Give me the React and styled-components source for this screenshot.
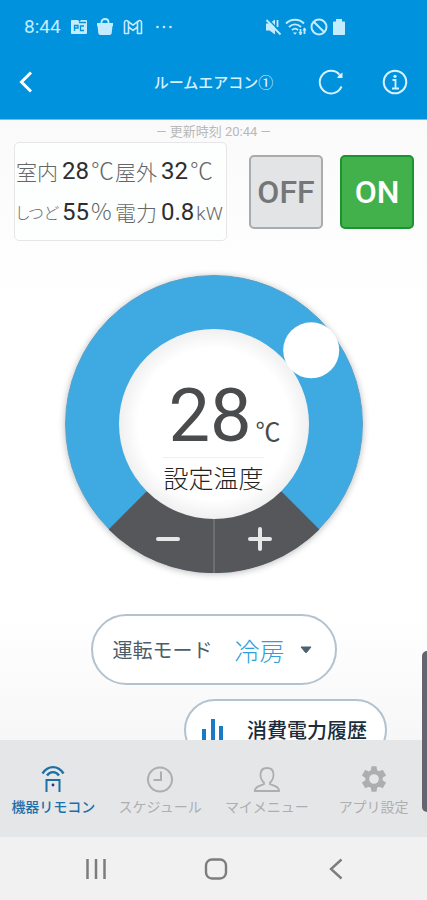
import React, { useState } from "react";
import styled, { createGlobalStyle } from "styled-components";

const GlobalStyle = createGlobalStyle`
  *, *::before, *::after {
    box-sizing: border-box;
  }
  body {
    margin: 0;
    font-family: Roboto, "Noto Sans CJK JP", sans-serif;
    color: #4a4a4a;
  }
  button, select, input {
    font: inherit;
    color: inherit;
  }
`;

const Page = styled.div`
  position: relative;
  display: flex;
  flex-direction: column;
  height: 100vh;
  background: #fff;
`;

const Header = styled.header`
  padding-bottom: 9px;
  background: #0092dc;
  border-bottom: 1px solid #6fbfe8;
  color: #d6f1ff;
`;

const StatusBar = styled.div`
  display: flex;
  align-items: center;
  justify-content: space-between;
  height: 54px;
  padding: 0 80px 0 24px;
  color: #c4ebff;
`;

const StatusGroup = styled.div`
  display: flex;
  align-items: center;
  gap: ${(props) => props.$gap};
`;

const Clock = styled.time`
  font-size: 19px;
  line-height: 24px;
`;

const AppBar = styled.div`
  display: grid;
  grid-template-columns: 1fr auto 1fr;
  align-items: center;
  height: 56px;
  padding: 0 18px;
`;

const BarActions = styled.div`
  display: flex;
  justify-content: flex-end;
  gap: 36px;
`;

const IconButton = styled.button`
  display: flex;
  align-items: center;
  justify-content: center;
  width: 28px;
  height: 28px;
  padding: 0;
  border: 0;
  background: none;
  cursor: pointer;
`;

const BackButton = styled(IconButton)`
  justify-content: flex-start;
`;

const PageTitle = styled.h1`
  margin: 0;
  font-family: "Noto Sans CJK JP", sans-serif;
  font-size: 15px;
  font-weight: 500;
  line-height: 24px;
`;

const Main = styled.main`
  flex: 1;
  min-height: 0;
  overflow: hidden;
  background: linear-gradient(#fafafa, #fff 30%, #fff 80%, #f7f7f8);
`;

const Updated = styled.p`
  margin: 0;
  padding-top: 2px;
  text-align: center;
  font-size: 13px;
  line-height: 20px;
  color: #b9b9b9;
`;

const Overview = styled.section`
  display: flex;
  align-items: center;
  gap: 17px;
  padding: 0 13px 0 14px;
`;

const Readings = styled.dl`
  flex: 1;
  display: grid;
  grid-template-columns: 99px 1fr;
  align-content: center;
  height: 99px;
  margin: 0 5px 0 0;
  padding-left: 1px;
  border: 1px solid #e4e6e8;
  border-radius: 5px;
  background: #fdfefe;
`;

const Reading = styled.div`
  display: flex;
  align-items: center;
  height: 41px;
  white-space: nowrap;
`;

const ReadingName = styled.dt`
  flex: none;
  width: 42px;
  margin-right: 4px;
  font-family: "Noto Sans CJK JP", sans-serif;
  font-size: ${(props) => (props.$long ? "16px" : "21px")};
  font-weight: 300;
  font-feature-settings: "palt";
  color: #666;
`;

const ReadingValue = styled.dd`
  display: flex;
  align-items: baseline;
  gap: 2px;
  margin: 0;
  font-size: 24px;
  color: #2e2e2e;
`;

const Unit = styled.span`
  font-family: ${(props) =>
    props.$latin ? "Roboto" : '"Noto Sans CJK JP"'}, sans-serif;
  font-size: ${(props) => (props.$latin ? "19px" : "23px")};
  font-weight: 300;
  line-height: 24px;
  color: #666;
`;

const PowerButton = styled.button`
  width: 74px;
  height: 74px;
  padding: 0;
  border: 2px solid ${(props) => (props.$on ? "#1c9331" : "#a9abad")};
  border-radius: 5px;
  background: ${(props) => (props.$on ? "#43b14b" : "#e3e4e6")};
  color: ${(props) => (props.$on ? "#fff" : "#747678")};
  font-size: 32px;
  font-weight: 500;
  cursor: pointer;
`;

const Dial = styled.section`
  position: relative;
  width: 298px;
  height: 298px;
  margin: 34px auto 0;
  border-radius: 50%;
  box-shadow: 0 1px 7px rgba(0, 0, 0, 0.28);
`;

const DialRing = styled.svg`
  display: block;
  width: 100%;
  height: 100%;
`;

const DialRange = styled.input`
  position: absolute;
  inset: 0;
  width: 100%;
  height: 50%;
  margin: 0;
  opacity: 0;
  cursor: pointer;
`;

const DialFace = styled.div`
  position: absolute;
  inset: 0;
  display: flex;
  flex-direction: column;
  align-items: center;
  padding-top: 104px;
  pointer-events: none;
`;

const Temperature = styled.output`
  display: flex;
  align-items: baseline;
  gap: 4px;
  padding-left: 22px;
  font-size: 74px;
  line-height: 74px;
  color: #4a4b4d;
`;

const Degree = styled.span`
  font-family: "Noto Sans CJK JP", sans-serif;
  font-size: 25px;
  line-height: 25px;
`;

const DialLabel = styled.label`
  margin-top: 4px;
  padding-top: 4px;
  border-top: 1px solid #f0f0f0;
  font-family: "Noto Sans CJK JP", sans-serif;
  font-size: 25px;
  font-weight: 300;
  line-height: 30px;
  color: #222;
`;

const Steps = styled.div`
  position: absolute;
  left: 0;
  right: 0;
  bottom: 12px;
  display: flex;
  justify-content: center;
  gap: 48px;
`;

const StepButton = styled(IconButton)`
  width: 44px;
  height: 44px;
  color: #e8e8e8;
`;

const ModeRow = styled.div`
  display: flex;
  justify-content: center;
  margin-top: 41px;
`;

const ModePill = styled.div`
  position: relative;
  display: flex;
  align-items: center;
  gap: 22px;
  height: 71px;
  padding: 0 22px 0 20px;
  border: 2px solid #b3c2cf;
  border-radius: 36px;
  background: #fff;
`;

const ModeLabel = styled.label`
  font-family: "Noto Sans CJK JP", sans-serif;
  font-size: 20px;
  font-weight: 400;
  color: #4b5d69;
`;

const ModeSelect = styled.select`
  appearance: none;
  width: 78px;
  padding: 0;
  border: 0;
  background: none;
  font-family: "Noto Sans CJK JP", sans-serif;
  font-size: 25px;
  font-weight: 300;
  line-height: 36px;
  color: #2f9fdc;
  cursor: pointer;
`;

const Caret = styled.svg`
  position: absolute;
  right: 23px;
  pointer-events: none;
`;

const HistoryRow = styled.div`
  display: flex;
  justify-content: flex-end;
  margin-top: 14px;
  padding-right: 40px;
`;

const HistoryButton = styled.button`
  display: flex;
  align-items: center;
  gap: 22px;
  height: 62px;
  padding: 0 18px 0 15px;
  border: 2px solid #b3c2cf;
  border-radius: 31px;
  background: #fff;
  font-family: "Noto Sans CJK JP", sans-serif;
  font-size: 20px;
  font-weight: 500;
  line-height: 30px;
  color: #1b2c3a;
  white-space: nowrap;
  cursor: pointer;
`;

const TabBar = styled.nav`
  display: grid;
  grid-template-columns: repeat(4, 1fr);
  height: 97px;
  background: #e5e6e8;
`;

const Tab = styled.a`
  display: flex;
  flex-direction: column;
  align-items: center;
  gap: 1px;
  padding-top: 25px;
  font-family: "Noto Sans CJK JP", sans-serif;
  font-size: 14px;
  font-weight: ${(props) => (props.$active ? 500 : 400)};
  line-height: 24px;
  text-decoration: none;
  white-space: nowrap;
  color: ${(props) => (props.$active ? "#1b70a8" : "#adaeb0")};
`;

const SystemBar = styled.div`
  display: flex;
  align-items: center;
  justify-content: space-between;
  height: 63px;
  padding: 0 77px 0 82px;
  background: #f1f1f1;
  color: #7d7d7d;
`;

const EdgeHandle = styled.div`
  position: absolute;
  top: 651px;
  right: 0;
  width: 5px;
  height: 161px;
  border-radius: 5px 0 0 5px;
  background: #66656f;
`;

const READINGS = [
  { name: "室内", value: "28", unit: "℃" },
  { name: "屋外", value: "32", unit: "℃" },
  { name: "しつど", value: "55", unit: "%" },
  { name: "電力", value: "0.8", unit: "kW", latin: true },
];

const MODES = ["冷房", "暖房", "除湿", "送風"];

const MIN_TEMP = 12;
const MAX_TEMP = 35;

const RemoteIcon = () => (
  <svg width="26" height="28" viewBox="0 0 26 28" fill="none" stroke="currentColor" strokeWidth="2">
    <path d="M2.500 8.500C8 0 18 0 23.500 8.500" strokeWidth="2.400" />
    <path d="M7 10.500c3-4.500 9-4.500 12 0" strokeWidth="2.400" />
    <path d="M6.500 27V15h13v12M5.500 15h15" />
    <circle cx="13" cy="20" r="1.400" fill="#2a2f8f" stroke="none" />
  </svg>
);

const ClockIcon = () => (
  <svg width="28" height="28" viewBox="0 0 28 28" fill="none" stroke="currentColor" strokeWidth="2">
    <circle cx="14" cy="14.500" r="12" />
    <path d="M15 6.500V15H7.500" />
  </svg>
);

const UserIcon = () => (
  <svg width="28" height="28" viewBox="0 0 28 28" fill="none" stroke="currentColor" strokeWidth="1.800" strokeLinejoin="round">
    <path d="M11 17.500C8.500 15.500 7.500 12.500 7.500 9.500 7.500 5.500 10 3 14 3s6.500 2.500 6.500 6.500c0 3-1 6-3.500 8v1.700c4 1.300 9 2.300 9.300 6.800H1.700C2 21.500 7 20.500 11 19.200z" />
  </svg>
);

const GearIcon = () => (
  <svg width="30" height="28" viewBox="-1 0 26 24" fill="currentColor">
    <path d="M19.430 12.980c.04-.32.07-.64.07-.98s-.03-.66-.07-.98l2.700-1.900c.2-.15.250-.42.120-.64l-2.400-4.100c-.12-.22-.39-.3-.61-.22l-2.900 1.200c-.52-.4-1.080-.73-1.690-.98l-.38-3C14.250 1.180 14.040 1 13.800 1h-3.600c-.25 0-.46.18-.49.42l-.38 3c-.61.250-1.170.59-1.690.98l-2.900-1.200c-.23-.09-.49 0-.61.22l-2.400 4.100c-.13.22-.07.490.12.640l2.700 1.900c-.04.320-.07.650-.07.980s.03.660.07.980l-2.700 1.900c-.19.150-.24.420-.12.640l2.400 4.100c.12.220.39.300.61.220l2.900-1.200c.52.400 1.080.730 1.690.980l.38 3c.03.240.24.420.49.420h3.600c.25 0 .46-.18.49-.42l.38-3c.61-.25 1.170-.59 1.690-.98l2.900 1.200c.23.090.49 0 .61-.22l2.400-4.100c.12-.22.07-.49-.12-.64zM12 16.200a4.200 4.200 0 1 1 0-8.400 4.200 4.200 0 0 1 0 8.400z" />
  </svg>
);

const TABS = [
  { label: "機器リモコン", icon: <RemoteIcon />, active: true },
  { label: "スケジュール", icon: <ClockIcon /> },
  { label: "マイメニュー", icon: <UserIcon /> },
  { label: "アプリ設定", icon: <GearIcon /> },
];

function StatusIcons() {
  return (
    <StatusGroup $gap="3px">
      <svg width="18" height="18" viewBox="0 0 18 18" fill="currentColor">
        <path d="M2 5.500h3.500L11 1.500v15L5.500 12.500H2z" />
        <path d="M13.500 2v7" stroke="currentColor" strokeWidth="1.800" />
        <path d="M4 1l13 13.500" stroke="#0092dc" strokeWidth="1.600" />
        <path d="M2.500 2l14 14.500" stroke="currentColor" strokeWidth="1.800" />
      </svg>
      <svg width="22" height="18" viewBox="0 0 22 18" fill="none" stroke="currentColor" strokeWidth="1.800">
        <path d="M1 5.500C6 .5 14 .5 19 5.500M4 9c3.500-3.500 8.500-3.500 12 0M7 12.200c2-2 4.500-2 6 0" />
        <path d="M8 14.500l2 2.300 2-2.300z" fill="currentColor" stroke="none" />
        <path d="M15.500 11v6M19.500 10v6" />
        <path d="M13.500 14l2 3 2-3zM17.500 12.500l2-3 2 3z" fill="currentColor" stroke="none" />
      </svg>
      <svg width="18" height="18" viewBox="0 0 18 18" fill="none" stroke="currentColor" strokeWidth="2">
        <circle cx="9" cy="9" r="7.500" />
        <path d="M3.700 3.700l10.600 10.600" />
      </svg>
      <svg width="16" height="18" viewBox="0 0 16 18" fill="currentColor">
        <path d="M5 1h6v2.500h2c.6 0 1 .4 1 1V16c0 .6-.4 1-1 1H3c-.6 0-1-.4-1-1V4.500c0-.6.4-1 1-1h2z" />
      </svg>
    </StatusGroup>
  );
}

function TopBar() {
  return (
    <Header>
      <StatusBar>
        <StatusGroup $gap="10px">
          <Clock>8:44</Clock>
          <svg width="16" height="18" viewBox="0 0 16 18">
            <path d="M1 2h6l1.500 2L10 2h5c.5 0 1 .4 1 1v12c0 .5-.5 1-1 1H1c-.6 0-1-.5-1-1V3c0-.6.4-1 1-1z" fill="currentColor" />
            <path d="M3.500 13V7.500h3.500V10H3.500M13 8H9.500v4.500H13M8 4.500h7" stroke="#0092dc" strokeWidth="1.300" fill="none" />
          </svg>
          <svg width="16" height="18" viewBox="0 0 16 18">
            <path d="M0 5h16v3h-.5l-.8 7c-.1 1.300-1 2-2.200 2h-9c-1.200 0-2.100-.7-2.200-2l-.8-7H0z" fill="currentColor" />
            <path d="M4.500 6V4c0-4 7-4 7 0v2" fill="none" stroke="currentColor" strokeWidth="1.800" />
          </svg>
          <svg width="20" height="18" viewBox="0 0 20 18" fill="none" stroke="currentColor" strokeWidth="1.600" strokeLinejoin="round">
            <path d="M1.500 15.500V4.500c0-2 1.800-2.500 3-1.500L10 7.200 15.500 3c1.200-1 3-.5 3 1.500v11h-4V9L10 12.400 5.500 9v6.500z" />
            <path d="M5.500 9V4M14.500 9V4" />
          </svg>
          <svg width="22" height="18" viewBox="0 0 22 18" fill="currentColor">
            <circle cx="4.500" cy="9" r="1.300" />
            <circle cx="11" cy="9" r="1.300" />
            <circle cx="17.500" cy="9" r="1.300" />
          </svg>
        </StatusGroup>
        <StatusIcons />
      </StatusBar>
      <AppBar>
        <BackButton aria-label="戻る">
          <svg width="16" height="24" viewBox="0 0 16 24" fill="none" stroke="#fff" strokeWidth="3">
            <path d="M13 2.500L3.500 12l9.500 9.500" />
          </svg>
        </BackButton>
        <PageTitle>ルームエアコン①</PageTitle>
        <BarActions>
          <IconButton aria-label="更新">
            <svg width="28" height="28" viewBox="0 0 28 28" fill="none" stroke="currentColor" strokeWidth="2">
              <path d="M24.500 18.500A11.300 11.300 0 1 1 22.500 6.600" />
              <path d="M25.500 4.500v5.500H20l2-3z" fill="currentColor" stroke="none" />
            </svg>
          </IconButton>
          <IconButton aria-label="情報">
            <svg width="28" height="28" viewBox="0 0 28 28" fill="none" stroke="currentColor" strokeWidth="2">
              <circle cx="14" cy="14" r="11.300" />
              <path d="M11.500 12H14.500V20M11 20.500h7" strokeWidth="1.800" />
              <circle cx="14" cy="8.300" r="1.600" fill="currentColor" stroke="none" />
            </svg>
          </IconButton>
        </BarActions>
      </AppBar>
    </Header>
  );
}

function TemperatureDial({ value, onChange }) {
  const ratio = (value - MIN_TEMP) / (MAX_TEMP - MIN_TEMP);
  const angle = ((ratio * 270 - 135) * Math.PI) / 180;
  const knobX = 149 + 122 * Math.sin(angle);
  const knobY = 149 - 122 * Math.cos(angle);

  const step = (amount) =>
    onChange(Math.min(MAX_TEMP, Math.max(MIN_TEMP, value + amount)));

  return (
    <Dial>
      <DialRing viewBox="0 0 298 298" aria-hidden="true">
        <defs>
          <radialGradient id="face">
            <stop offset="0.8" stopColor="#fff" />
            <stop offset="1" stopColor="#f0f0f0" />
          </radialGradient>
        </defs>
        <circle cx="149" cy="149" r="148.500" fill="#3fa9e1" stroke="#5f9fc4" />
        <path d="M149 149L43.600 254.400A149 149 0 0 0 254.400 254.400z" fill="#56575a" />
        <path d="M149 240v58" stroke="#6d6e71" strokeWidth="2" />
        <circle cx="149" cy="149" r="95" fill="url(#face)" />
        <circle cx={knobX} cy={knobY} r="28" fill="#fff" />
      </DialRing>
      <DialRange
        id="temperature"
        type="range"
        min={MIN_TEMP}
        max={MAX_TEMP}
        value={value}
        onChange={(e) => onChange(Number(e.target.value))}
      />
      <DialFace>
        <Temperature htmlFor="temperature">
          {value}
          <Degree>℃</Degree>
        </Temperature>
        <DialLabel htmlFor="temperature">設定温度</DialLabel>
      </DialFace>
      <Steps>
        <StepButton aria-label="下げる" onClick={() => step(-1)}>
          <svg width="26" height="26" viewBox="0 0 26 26" stroke="currentColor" strokeWidth="4" strokeLinecap="round">
            <path d="M3 13h20" />
          </svg>
        </StepButton>
        <StepButton aria-label="上げる" onClick={() => step(1)}>
          <svg width="26" height="26" viewBox="0 0 26 26" stroke="currentColor" strokeWidth="4" strokeLinecap="round">
            <path d="M3 13h20M13 3v20" />
          </svg>
        </StepButton>
      </Steps>
    </Dial>
  );
}

function App() {
  const [power, setPower] = useState(true);
  const [temperature, setTemperature] = useState(28);
  const [mode, setMode] = useState(MODES[0]);

  return (
    <Page>
      <GlobalStyle />
      <TopBar />
      <Main>
        <Updated>― 更新時刻 20:44 ―</Updated>
        <Overview>
          <Readings>
            {READINGS.map((reading) => (
              <Reading key={reading.name}>
                <ReadingName $long={reading.name.length > 2}>
                  {reading.name}
                </ReadingName>
                <ReadingValue>
                  {reading.value}
                  <Unit $latin={reading.latin}>{reading.unit}</Unit>
                </ReadingValue>
              </Reading>
            ))}
          </Readings>
          <PowerButton aria-pressed={!power} onClick={() => setPower(false)}>
            OFF
          </PowerButton>
          <PowerButton $on aria-pressed={power} onClick={() => setPower(true)}>
            ON
          </PowerButton>
        </Overview>
        <TemperatureDial value={temperature} onChange={setTemperature} />
        <ModeRow>
          <ModePill>
            <ModeLabel htmlFor="mode">運転モード</ModeLabel>
            <ModeSelect
              id="mode"
              value={mode}
              onChange={(e) => setMode(e.target.value)}
            >
              {MODES.map((name) => (
                <option key={name}>{name}</option>
              ))}
            </ModeSelect>
            <Caret width="12" height="8" viewBox="0 0 12 8" fill="#4b6273">
              <path d="M1 1h10L6.500 6.500h-1z" stroke="#4b6273" strokeLinejoin="round" />
            </Caret>
          </ModePill>
        </ModeRow>
        <HistoryRow>
          <HistoryButton>
            <svg width="24" height="26" viewBox="0 0 24 26" fill="#1a7ac4">
              <path d="M1 12h4v14H1zM10 2h4v24h-4zM18 9h4v17h-4z" />
            </svg>
            消費電力履歴
          </HistoryButton>
        </HistoryRow>
      </Main>
      <TabBar>
        {TABS.map((tab) => (
          <Tab
            key={tab.label}
            href="#"
            $active={tab.active}
            aria-current={tab.active ? "page" : undefined}
          >
            {tab.icon}
            {tab.label}
          </Tab>
        ))}
      </TabBar>
      <SystemBar>
        <IconButton aria-label="履歴">
          <svg width="28" height="28" viewBox="0 0 28 28" stroke="currentColor" strokeWidth="2.500">
            <path d="M5.500 4v20M14 4v20M22.500 4v20" />
          </svg>
        </IconButton>
        <IconButton aria-label="ホーム">
          <svg width="28" height="28" viewBox="0 0 28 28" fill="none" stroke="currentColor" strokeWidth="2.400">
            <rect x="4" y="4.500" width="20" height="19" rx="6" />
          </svg>
        </IconButton>
        <IconButton aria-label="戻る">
          <svg width="28" height="28" viewBox="0 0 28 28" fill="none" stroke="currentColor" strokeWidth="2.400">
            <path d="M19.500 4.500L9 14l10.500 9.500" />
          </svg>
        </IconButton>
      </SystemBar>
      <EdgeHandle />
    </Page>
  );
}

export default App;
